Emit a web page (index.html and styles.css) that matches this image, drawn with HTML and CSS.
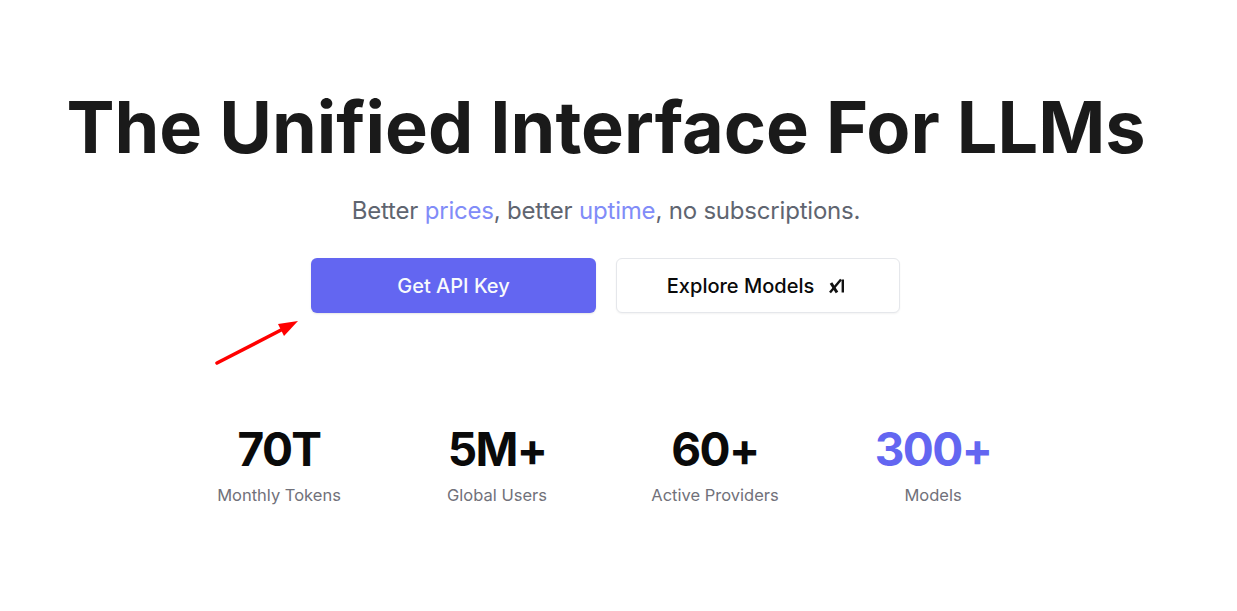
FILE: index.html
```html
<!DOCTYPE html>
<html lang="en">
<head>
<meta charset="utf-8">
<title>The Unified Interface For LLMs</title>
<link rel="stylesheet" href="styles.css">
</head>
<body>
<main class="hero">
  <h1 class="title">The Unified Interface For LLMs</h1>
  <p class="tagline">Better <a class="accent" href="#">prices</a>, better <a class="accent" href="#">uptime</a>, no subscriptions.</p>
  <div class="actions">
    <a class="btn btn-primary" href="#">Get API Key</a>
    <a class="btn btn-secondary" href="#">Explore Models
      <svg class="model-icon" viewBox="0 0 16 16" width="16" height="16" aria-hidden="true">
        <path d="M1 14.5 12 1.5" fill="none" stroke="#111" stroke-width="2.4"/>
        <path d="M2 5 8 14.5" fill="none" stroke="#111" stroke-width="3"/>
        <path d="M13.8 1.5v13" fill="none" stroke="#111" stroke-width="2.4"/>
      </svg>
    </a>
    <svg class="arrow" viewBox="0 0 90 60" width="90" height="60" aria-hidden="true">
      <path d="M2 54 68 20" fill="none" stroke="#f00" stroke-width="3.6" stroke-linecap="round"/>
      <path d="M83 12 63 15 69 27Z" fill="#f00"/>
    </svg>
  </div>
  <section class="stats">
    <div class="stat"><div class="value">70T</div><div class="label">Monthly Tokens</div></div>
    <div class="stat"><div class="value">5M+</div><div class="label">Global Users</div></div>
    <div class="stat"><div class="value">60+</div><div class="label">Active Providers</div></div>
    <div class="stat"><div class="value value-accent">300+</div><div class="label">Models</div></div>
  </section>
</main>
</body>
</html>
```
FILE: styles.css
```css
* { box-sizing: border-box; }
html, body { margin: 0; height: 100%; background: #fff; overflow: hidden; }
body { font-family: Inter, "Liberation Sans", sans-serif; }
.hero {
  width: 1212px;
  padding-top: 87px;
  display: flex;
  flex-direction: column;
  align-items: center;
}
.title {
  margin: 0;
  font-size: 72px;
  line-height: 80px;
  font-weight: 750;
  color: #1a1a1a;
  white-space: nowrap;
}
.tagline {
  margin: 28px 0 0;
  font-size: 24px;
  line-height: 32px;
  letter-spacing: -0.2px;
  color: #5f6570;
}
.accent { color: #818cf8; text-decoration: none; }
.actions {
  position: relative;
  margin-top: 31px;
  margin-left: -1px;
  display: flex;
  gap: 20px;
}
.btn {
  display: flex;
  align-items: center;
  justify-content: center;
  height: 55px;
  border-radius: 6px;
  font-size: 20px;
  font-weight: 500;
  text-decoration: none;
}
.btn-primary {
  width: 285px;
  background: #6366f1;
  color: #f8fafc;
  box-shadow: 0 1px 2px rgba(0,0,0,.1);
}
.btn-secondary {
  width: 284px;
  gap: 15px;
  padding-right: 4px;
  background: #fff;
  color: #0a0a0a;
  border: 1px solid #e5e7eb;
  box-shadow: 0 1px 2px rgba(0,0,0,.05);
}
.arrow { position: absolute; left: -96px; top: 51px; }
.stats {
  margin-top: 112px;
  display: grid;
  grid-template-columns: repeat(4, 218px);
}
.stat { text-align: center; }
.value {
  font-size: 46px;
  line-height: 48px;
  font-weight: 700;
  letter-spacing: -1.6px;
  color: #0a0a0a;
}
.value-accent { color: #6366f1; }
.label {
  margin-top: 10px;
  font-size: 16.5px;
  line-height: 24px;
  color: #71717a;
}
```
